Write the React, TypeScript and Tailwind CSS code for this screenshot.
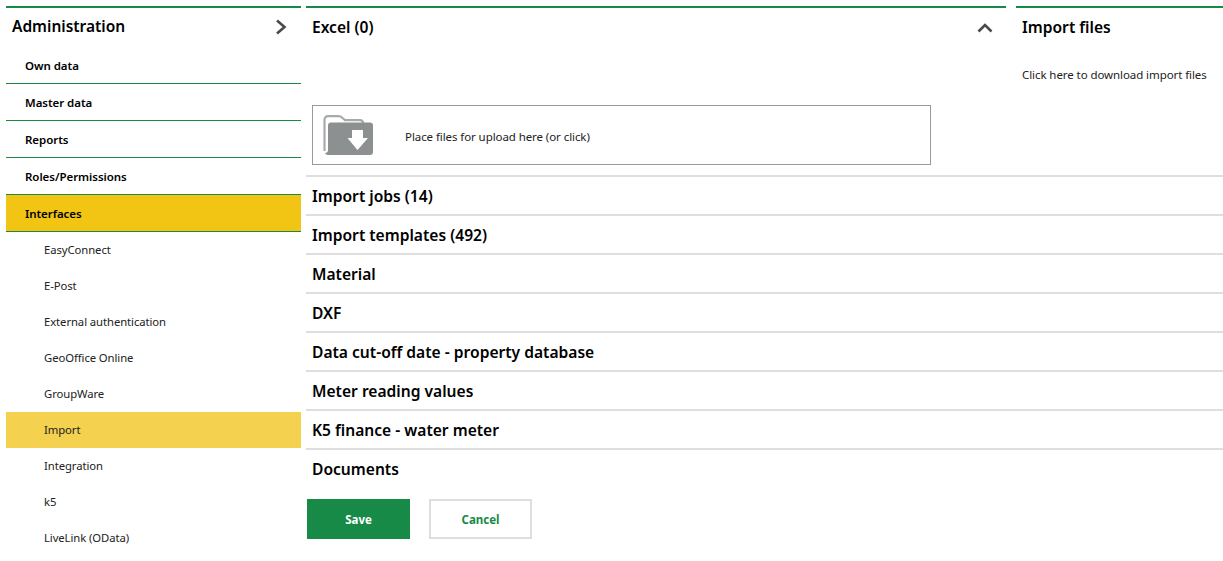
const font = { fontFamily: '"Noto Sans", sans-serif' };

const mainItems = ["Own data", "Master data", "Reports", "Roles/Permissions"];
const subItems = ["EasyConnect", "E-Post", "External authentication", "GeoOffice Online", "GroupWare", "Import", "Integration", "k5", "LiveLink (OData)"];
const sections = ["Import jobs (14)", "Import templates (492)", "Material", "DXF", "Data cut-off date - property database", "Meter reading values", "K5 finance - water meter"];

function FolderIcon() {
  return (
    <svg width="50" height="40" viewBox="0 0 50 40">
      <path d="M1.5 36V5C1.5 2.5 2.8 1.2 5 1.2H15.5C17.5 1.2 18.5 2 19.5 3L22 5.2H37C39 5.2 40 6 40 8" fill="none" stroke="#a8aaaa" strokeWidth="2.2" />
      <path d="M5 35V10.5C5 8.5 6 7.5 8 7.5H47C49 7.5 50 8.5 50 10.5V37C50 39 49 40 47 40H5C3.5 40 2.5 39 2 38C4 38 5 37 5 35Z" fill="#8d9090" />
      <path d="M29 15H40V23H45L34.5 35L24.5 23H29Z" fill="#fff" />
    </svg>
  );
}

export default function App() {
  return (
    <div className="flex h-[561px] w-[1223px] overflow-hidden bg-white pt-1.5 pl-1.5 text-black" style={font}>
      {/* Sidebar */}
      <aside className="w-[295px] shrink-0">
        <div className="flex h-[41px] items-center justify-between border-t-2 border-[#168a46] pr-[14px] pb-0.5 pl-1.5">
          <span className="text-[15.5px] leading-none font-semibold">Administration</span>
          <svg width="12" height="16" viewBox="0 0 12 16">
            <path d="M2 1.5L9.5 8L2 14.5" fill="none" stroke="#4a4a4a" strokeWidth="2.6" />
          </svg>
        </div>
        {mainItems.map((item) => (
          <div key={item} className="flex h-[37px] items-center border-b border-[#168a46] pt-0.5 pl-[19px] text-[11.5px] font-semibold tracking-[-0.05px]">
            {item}
          </div>
        ))}
        <div className="flex h-[37px] items-center border-b border-[#168a46] bg-[#f2c413] pt-0.5 pl-[19px] text-[11.5px] font-semibold tracking-[-0.05px]">
          Interfaces
        </div>
        {subItems.map((item) => (
          <div key={item} className={`flex h-9 items-center pl-[38px] text-[11.3px] tracking-[-0.08px] text-[#222] ${item === "Import" ? "bg-[#f4d14f]" : ""}`}>
            {item}
          </div>
        ))}
      </aside>

      {/* Main */}
      <main className="ml-[5px] flex-1">
        <div className="flex">
          <section className="w-[700px] shrink-0">
            <div className="flex h-[39px] items-center justify-between border-t-2 border-[#168a46] pt-0.5 pr-[13px] pl-1.5">
              <span className="text-[15.6px] font-semibold">Excel (0)</span>
              <svg width="16" height="10" viewBox="0 0 16 10">
                <path d="M1.5 8.5L8 2L14.5 8.5" fill="none" stroke="#4a4a4a" strokeWidth="2.6" />
              </svg>
            </div>
            <div className="mt-[60px] ml-1.5 flex h-[60px] w-[619px] items-center border border-[#999] pl-[10px]">
              <FolderIcon />
              <span className="mt-1 ml-[32px] text-[11.5px] tracking-[-0.08px] text-[#222]">Place files for upload here (or click)</span>
            </div>
          </section>
          <section className="ml-2.5 flex-1">
            <div className="flex h-[39px] items-center border-t-2 border-[#168a46] pt-0.5 pl-1.5 text-[15.6px] font-semibold">Import files</div>
            <p className="mt-[22px] pl-1.5 text-[11.5px] leading-4 tracking-[-0.08px] text-[#222]">Click here to download import files</p>
          </section>
        </div>

        <div className="mt-[10px]">
          {sections.map((s) => (
            <div key={s} className="flex h-[39px] items-center border-t-2 border-[#dedede] pt-0.5 pl-1.5 text-[15.6px] font-semibold">
              {s}
            </div>
          ))}
          <div className="flex h-[39px] items-center border-t-2 border-[#dedede] pt-0.5 pl-1.5 text-[15.6px] font-semibold">Documents</div>
        </div>

        <div className="mt-[12px] ml-px flex gap-[19px]">
          <button className="h-10 w-[103px] bg-[#168a46] pt-0.5 text-[11.5px] font-bold text-white">Save</button>
          <button className="h-10 w-[103px] border-2 border-[#dedede] bg-white pt-0.5 text-[11.5px] font-bold text-[#168a46]">Cancel</button>
        </div>
      </main>
    </div>
  );
}
